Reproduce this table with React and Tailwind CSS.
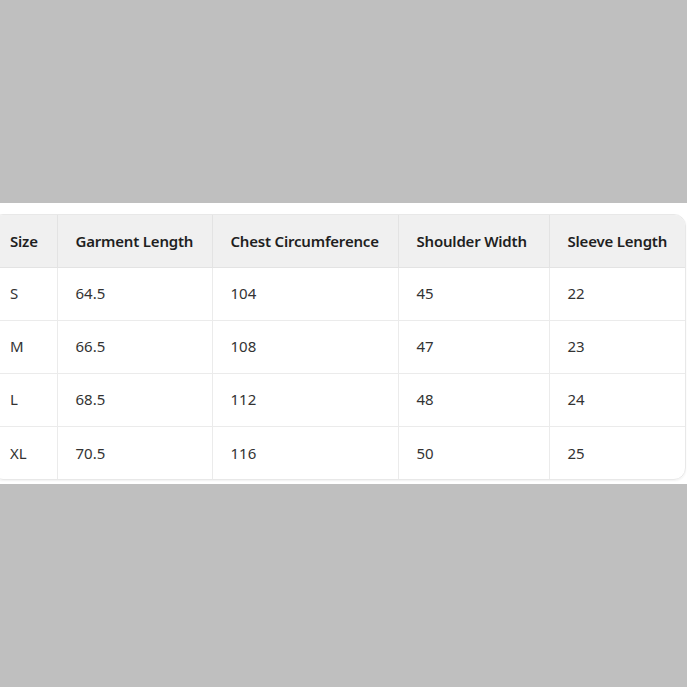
const headers = ['Size', 'Garment Length', 'Chest Circumference', 'Shoulder Width', 'Sleeve Length'];

const rows = [
  ['S', '64.5', '104', '45', '22'],
  ['M', '66.5', '108', '47', '23'],
  ['L', '68.5', '112', '48', '24'],
  ['XL', '70.5', '116', '50', '25'],
];

export default function App() {
  return (
    <div className="h-[687px] w-[687px] bg-[#bfbfbf] overflow-hidden font-['Noto_Sans',sans-serif]">
      <div className="h-[203px]" />
      <div className="h-[281px] bg-white pt-[11px]">
        <div className="ml-[-9px] w-[695px] overflow-hidden rounded-xl border border-[#e8e8e8] shadow-[0_1px_2px_rgba(0,0,0,0.06)]">
          <table className="w-full table-fixed border-collapse text-[15px]">
            <colgroup>
              <col className="w-[65px]" />
              <col className="w-[155px]" />
              <col className="w-[186px]" />
              <col className="w-[151px]" />
              <col />
            </colgroup>
            <thead>
              <tr className="bg-[#f0f0f0]">
                {headers.map((h, i) => (
                  <th
                    key={h}
                    className={`h-[52px] px-[18px] whitespace-nowrap text-left font-semibold tracking-[-0.2px] text-[#1f1f1f] border-b border-[#e3e3e3] ${i > 0 ? 'border-l' : ''}`}
                  >
                    {h}
                  </th>
                ))}
              </tr>
            </thead>
            <tbody>
              {rows.map((r, ri) => (
                <tr key={r[0]}>
                  {r.map((c, i) => (
                    <td
                      key={i}
                      className={`h-[53px] px-[18px] text-[#333] border-[#ebebeb] ${i > 0 ? 'border-l' : ''} ${ri < rows.length - 1 ? 'border-b' : ''}`}
                    >
                      {c}
                    </td>
                  ))}
                </tr>
              ))}
            </tbody>
          </table>
        </div>
      </div>
    </div>
  );
}
